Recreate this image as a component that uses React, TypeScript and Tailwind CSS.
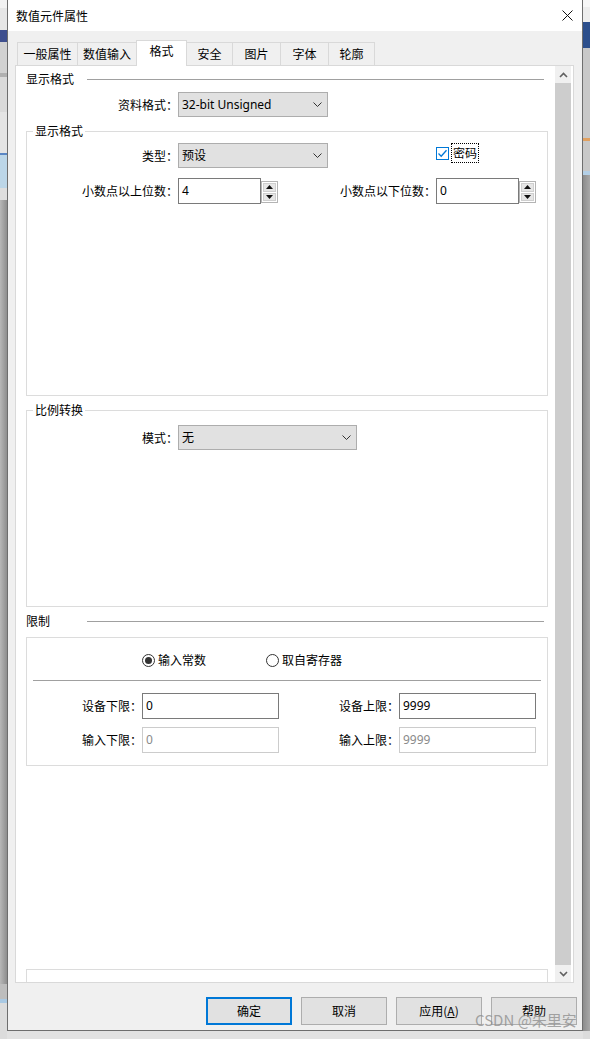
import React from "react";

function Chevron({ dir = "down", color = "#333" }: { dir?: "down" | "up"; color?: string }) {
  return (
    <svg width="9" height="5" viewBox="0 0 9 5" className="block">
      <polyline
        points={dir === "down" ? "0.5,0.5 4.5,4.5 8.5,0.5" : "0.5,4.5 4.5,0.5 8.5,4.5"}
        fill="none"
        stroke={color}
        strokeWidth="1"
      />
    </svg>
  );
}

function ScrollArrow({ dir }: { dir: "up" | "down" }) {
  return (
    <svg width="9" height="6" viewBox="0 0 9 6" className="block">
      <polyline
        points={dir === "down" ? "1,1 4.5,4.5 8,1" : "1,5 4.5,1.5 8,5"}
        fill="none"
        stroke="#606060"
        strokeWidth="1.6"
      />
    </svg>
  );
}

function Select({ className, value }: { className: string; value: string }) {
  return (
    <div
      className={`${className} h-[25px] shrink-0 bg-[#e1e1e1] border border-[#adadad] flex items-center justify-between pl-[3px] pr-[5px]`}
    >
      <span className="leading-[16px] font-['Noto_Sans','Noto_Sans_CJK_SC',sans-serif]">{value}</span>
      <Chevron />
    </div>
  );
}

function Tri({ up }: { up?: boolean }) {
  return (
    <svg width="7" height="4" viewBox="0 0 7 4" className="block">
      <polygon points={up ? "0,4 7,4 3.5,0" : "0,0 7,0 3.5,4"} fill="#111" />
    </svg>
  );
}

function Spin({ value }: { value: string }) {
  return (
    <div className="w-[100px] h-[26px] flex shrink-0">
      <div className="w-[83px] h-[26px] border border-[#7a7a7a] bg-white flex items-center pl-[3px] leading-[16px] font-['Noto_Sans',sans-serif]">
        {value}
      </div>
      <div className="w-[17px] h-[22px] mt-[3px] border border-[#b4b4b4] bg-white flex flex-col p-[1px] gap-[1px]">
        <div className="flex-1 bg-[#e6e6e6] border border-[#cfcfcf] flex items-center justify-center">
          <Tri up />
        </div>
        <div className="flex-1 bg-[#e6e6e6] border border-[#cfcfcf] flex items-center justify-center">
          <Tri />
        </div>
      </div>
    </div>
  );
}

function TextInput({ value, disabled }: { value: string; disabled?: boolean }) {
  return (
    <div
      className={
        disabled
          ? "w-[137px] h-[26px] shrink-0 border border-[#cccccc] bg-white flex items-center pl-[3px] text-[#8a8a8a] leading-[16px] font-['Noto_Sans',sans-serif]"
          : "w-[137px] h-[26px] shrink-0 border border-[#7a7a7a] bg-white flex items-center pl-[3px] leading-[16px] font-['Noto_Sans',sans-serif]"
      }
    >
      {value}
    </div>
  );
}

function Radio({ checked }: { checked?: boolean }) {
  return (
    <div className="w-[13px] h-[13px] rounded-full border border-[#333333] bg-white flex items-center justify-center shrink-0">
      {checked && <div className="w-[7px] h-[7px] rounded-full bg-[#333333]" />}
    </div>
  );
}

export default function App() {
  return (
    <div className="w-[590px] h-[1039px] overflow-hidden flex bg-[#c4c4c4] font-['Noto_Sans_CJK_SC','Noto_Sans',sans-serif] text-[12px] text-black relative">
      {/* desktop behind, left */}
      <div className="w-[7px] h-full flex flex-col shrink-0">
        <div className="h-[8px] bg-[#f2f2f2]" />
        <div className="h-[22px] bg-[#e6e6e6]" />
        <div className="h-[12px] bg-[#3e4f8e]" />
        <div className="h-[31px] bg-[#d1d1d1]" />
        <div className="h-[4px] bg-[#b0b0b0]" />
        <div className="h-[35px] bg-[#dadada]" />
        <div className="h-[41px] bg-[#e4e4e4]" />
        <div className="h-[2px] bg-[#5a86c4]" />
        <div className="h-[33px] bg-[#bcd6e8]" />
        <div className="h-[12px] bg-[#dedede]" />
        <div className="flex-1 bg-linear-to-r from-[#b8b8b8] to-[#8e8e8e]" />
        <div className="h-[15px] bg-[#bdbdbd]" />
        <div className="h-[4px] bg-[#a9c9e3]" />
        <div className="h-[36px] bg-[#dcdcdc]" />
      </div>

      {/* dialog column */}
      <div className="w-[576px] h-full flex flex-col shrink-0">
        <div className="h-[1031px] flex flex-col border-l border-r border-b border-[#6e6e6e] bg-[#f0f0f0] shrink-0">
          {/* title bar */}
          <div className="h-[31px] bg-white flex items-center justify-between pl-[8px] pr-[9px] shrink-0">
            <span className="leading-[16px]">数值元件属性</span>
            <svg width="11" height="11" viewBox="0 0 11 11" className="block">
              <line x1="0.5" y1="0.5" x2="10.5" y2="10.5" stroke="#111" strokeWidth="1" />
              <line x1="10.5" y1="0.5" x2="0.5" y2="10.5" stroke="#111" strokeWidth="1" />
            </svg>
          </div>

          {/* body */}
          <div className="flex-1 flex flex-col pt-[9px]">
            {/* tabs */}
            <div className="flex items-end h-[25px] pl-[9px] shrink-0">
              <div className="w-[61px] h-[23px] border border-b-0 border-[#d9d9d9] bg-[#f0f0f0] flex items-center justify-center leading-[16px]">
                一般属性
              </div>
              <div className="w-[60px] h-[23px] -ml-[1px] border border-b-0 border-[#d9d9d9] bg-[#f0f0f0] flex items-center justify-center leading-[16px]">
                数值输入
              </div>
              <div className="w-[51px] h-[26px] -ml-[1px] -mb-[1px] relative z-10 border border-b-0 border-[#d9d9d9] bg-white flex items-start justify-center pt-[2px] leading-[16px]">
                格式
              </div>
              <div className="w-[47px] h-[23px] -ml-[1px] border border-b-0 border-[#d9d9d9] bg-[#f0f0f0] flex items-center justify-center leading-[16px]">
                安全
              </div>
              <div className="w-[49px] h-[23px] -ml-[1px] border border-b-0 border-[#d9d9d9] bg-[#f0f0f0] flex items-center justify-center leading-[16px]">
                图片
              </div>
              <div className="w-[49px] h-[23px] -ml-[1px] border border-b-0 border-[#d9d9d9] bg-[#f0f0f0] flex items-center justify-center leading-[16px]">
                字体
              </div>
              <div className="w-[47px] h-[23px] -ml-[1px] border border-b-0 border-[#d9d9d9] bg-[#f0f0f0] flex items-center justify-center leading-[16px]">
                轮廓
              </div>
            </div>

            {/* tab panel */}
            <div className="ml-[7px] w-[559px] h-[918px] border border-[#d9d9d9] bg-white flex shrink-0">
              <div className="flex-1 h-full overflow-hidden flex flex-col">
                {/* 显示格式 header */}
                <div className="flex items-center h-[16px] mt-[5px] pl-[10px] pr-[11px] shrink-0">
                  <span className="leading-[16px]">显示格式</span>
                  <div className="flex-1 ml-[13px] h-px bg-[#a0a0a0]" />
                </div>
                <div className="flex items-center mt-[5px] shrink-0">
                  <div className="w-[162px] text-right leading-[16px]">资料格式：</div>
                  <Select className="w-[150px]" value="32-bit Unsigned" />
                </div>

                {/* group 显示格式 */}
                <div className="relative mt-[14px] ml-[10px] w-[522px] h-[265px] border border-[#dcdcdc] pt-[11px] flex flex-col shrink-0">
                  <span className="absolute left-[6px] -top-[9px] px-[2px] bg-white leading-[16px]">显示格式</span>
                  <div className="flex items-start">
                    <div className="w-[151px] h-[25px] flex items-center justify-end leading-[16px]">类型：</div>
                    <Select className="w-[150px]" value="预设" />
                    <div className="ml-[108px] flex items-center">
                      <div className="w-[13px] h-[13px] border border-[#0078d7] bg-white flex items-center justify-center">
                        <svg width="11" height="11" viewBox="0 0 11 11" className="block">
                          <polyline points="1.5,5.5 4.2,8.2 9.5,2.2" fill="none" stroke="#0078d7" strokeWidth="1.3" />
                        </svg>
                      </div>
                      <div className="ml-[2px] h-[20px] px-[1px] border border-dotted border-black flex items-center leading-[16px]">
                        密码
                      </div>
                    </div>
                  </div>
                  <div className="flex items-center mt-[10px]">
                    <div className="w-[151px] text-right leading-[16px]">小数点以上位数：</div>
                    <Spin value="4" />
                    <div className="w-[158px] text-right leading-[16px]">小数点以下位数：</div>
                    <Spin value="0" />
                  </div>
                </div>

                {/* group 比例转换 */}
                <div className="relative mt-[14px] ml-[10px] w-[522px] h-[197px] border border-[#dcdcdc] pt-[14px] flex flex-col shrink-0">
                  <span className="absolute left-[6px] -top-[9px] px-[2px] bg-white leading-[16px]">比例转换</span>
                  <div className="flex items-center">
                    <div className="w-[151px] text-right leading-[16px]">模式：</div>
                    <Select className="w-[179px]" value="无" />
                  </div>
                </div>

                {/* 限制 header */}
                <div className="flex items-center h-[16px] mt-[6px] pl-[10px] pr-[11px] shrink-0">
                  <span className="leading-[16px]">限制</span>
                  <div className="flex-1 ml-[37px] h-px bg-[#a0a0a0]" />
                </div>

                {/* limit group */}
                <div className="mt-[8px] ml-[10px] w-[522px] h-[129px] border border-[#dcdcdc] pt-[15px] flex flex-col shrink-0">
                  <div className="flex items-center h-[14px] pl-[115px]">
                    <Radio checked />
                    <span className="ml-[3px] leading-[16px]">输入常数</span>
                    <div className="ml-[60px]">
                      <Radio />
                    </div>
                    <span className="ml-[3px] leading-[16px]">取自寄存器</span>
                  </div>
                  <div className="mx-[6px] mt-[13px] h-px bg-[#a0a0a0]" />
                  <div className="flex items-center mt-[12px]">
                    <div className="w-[115px] text-right leading-[16px]">设备下限：</div>
                    <TextInput value="0" />
                    <div className="w-[120px] text-right leading-[16px]">设备上限：</div>
                    <TextInput value="9999" />
                  </div>
                  <div className="flex items-center mt-[8px]">
                    <div className="w-[115px] text-right leading-[16px]">输入下限：</div>
                    <TextInput value="0" disabled />
                    <div className="w-[120px] text-right leading-[16px]">输入上限：</div>
                    <TextInput value="9999" disabled />
                  </div>
                </div>

                {/* next group (cut off) */}
                <div className="mt-[203px] ml-[10px] w-[522px] h-[60px] border border-[#dcdcdc] shrink-0" />
              </div>

              {/* scrollbar */}
              <div className="w-[16px] mr-[2px] h-full flex flex-col bg-[#f0f0f0] shrink-0">
                <div className="h-[17px] flex items-center justify-center shrink-0">
                  <ScrollArrow dir="up" />
                </div>
                <div className="flex-1 bg-[#cdcdcd]" />
                <div className="h-[17px] flex items-center justify-center shrink-0">
                  <ScrollArrow dir="down" />
                </div>
              </div>
            </div>

            {/* buttons */}
            <div className="flex justify-end gap-[9px] pr-[5px] mt-[14px] shrink-0">
              <button className="w-[86px] h-[28px] border-2 border-[#0078d7] bg-[#e1e1e1] flex items-center justify-center leading-[16px]">
                确定
              </button>
              <button className="w-[86px] h-[28px] border border-[#adadad] bg-[#e1e1e1] flex items-center justify-center leading-[16px]">
                取消
              </button>
              <button className="w-[86px] h-[28px] border border-[#adadad] bg-[#e1e1e1] flex items-center justify-center leading-[16px]">
                应用(<span className="underline">A</span>)
              </button>
              <button className="w-[86px] h-[28px] border border-[#adadad] bg-[#e1e1e1] flex items-center justify-center leading-[16px]">
                帮助
              </button>
            </div>
          </div>
        </div>
        <div className="flex-1 bg-[#e2e2e2]" />
      </div>

      {/* desktop behind, right */}
      <div className="w-[7px] h-full flex flex-col shrink-0">
        <div className="h-[7px] bg-[#f7f7f7]" />
        <div className="h-[15px] bg-[#ededed]" />
        <div className="h-[26px] bg-[#2c4f8c]" />
        <div className="h-[90px] bg-[#c8c8c8]" />
        <div className="h-[3px] bg-[#e0a060]" />
        <div className="h-[30px] bg-[#c8c8c8]" />
        <div className="h-[4px] bg-[#b3cfe6]" />
        <div className="flex-1 bg-linear-to-r from-[#8c8c8c] to-[#a8a8a8]" />
        <div className="h-[8px] bg-[#dcdcdc]" />
      </div>

      {/* watermark */}
      <div className="absolute left-[475px] top-[1010px] text-[15px] leading-[20px] text-[#8f8f8f]/80">
        CSDN @朱里安
      </div>
    </div>
  );
}
